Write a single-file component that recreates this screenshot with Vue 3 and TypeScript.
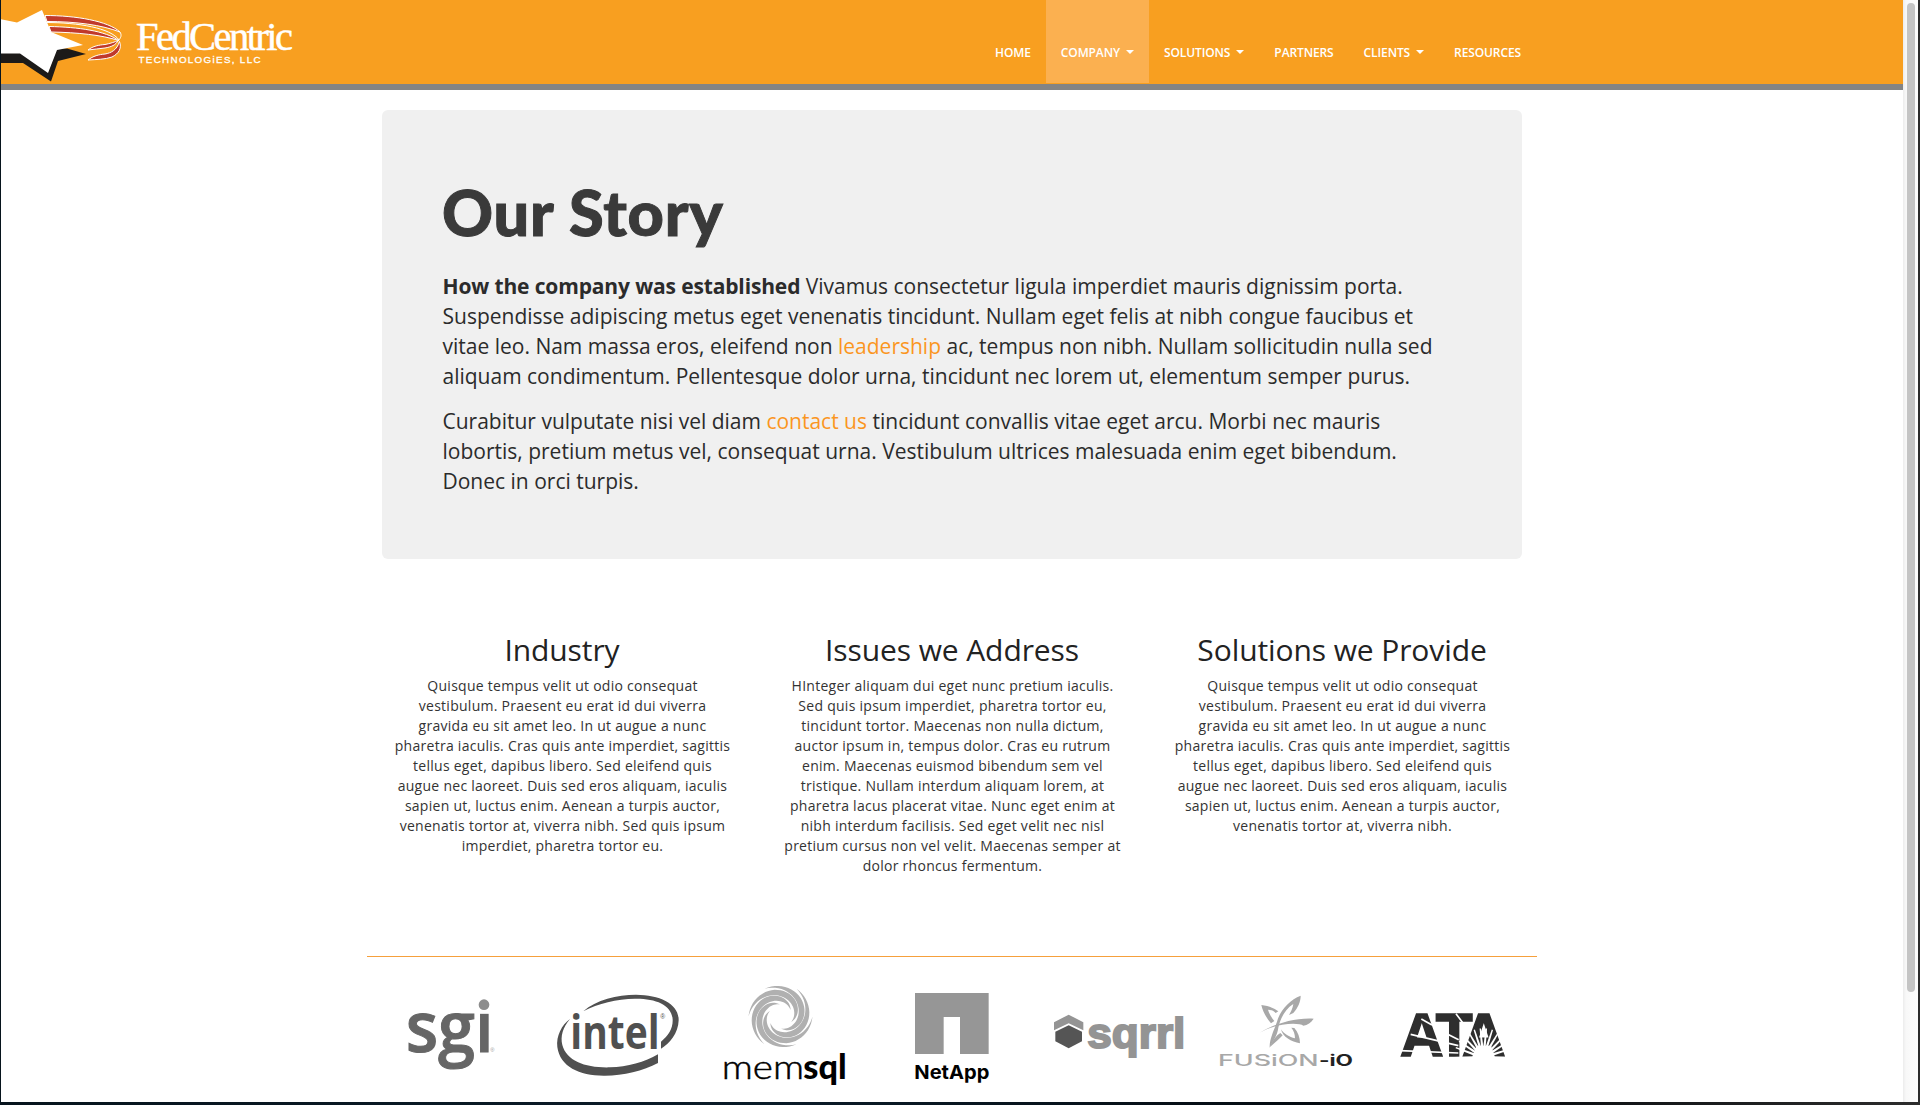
<script setup lang="ts">
interface NavItem { label: string; menu?: boolean; active?: boolean }
interface Column { title: string; lines: string[] }

const nav: NavItem[] = [
  { label: 'HOME' },
  { label: 'COMPANY', menu: true, active: true },
  { label: 'SOLUTIONS', menu: true },
  { label: 'PARTNERS' },
  { label: 'CLIENTS', menu: true },
  { label: 'RESOURCES' },
]

const columns: Column[] = [
  {
    title: 'Industry',
    lines: [
      'Quisque tempus velit ut odio consequat',
      'vestibulum. Praesent eu erat id dui viverra',
      'gravida eu sit amet leo. In ut augue a nunc',
      'pharetra iaculis. Cras quis ante imperdiet, sagittis',
      'tellus eget, dapibus libero. Sed eleifend quis',
      'augue nec laoreet. Duis sed eros aliquam, iaculis',
      'sapien ut, luctus enim. Aenean a turpis auctor,',
      'venenatis tortor at, viverra nibh. Sed quis ipsum',
      'imperdiet, pharetra tortor eu.',
    ],
  },
  {
    title: 'Issues we Address',
    lines: [
      'HInteger aliquam dui eget nunc pretium iaculis.',
      'Sed quis ipsum imperdiet, pharetra tortor eu,',
      'tincidunt tortor. Maecenas non nulla dictum,',
      'auctor ipsum in, tempus dolor. Cras eu rutrum',
      'enim. Maecenas euismod bibendum sem vel',
      'tristique. Nullam interdum aliquam lorem, at',
      'pharetra lacus placerat vitae. Nunc eget enim at',
      'nibh interdum facilisis. Sed eget velit nec nisl',
      'pretium cursus non vel velit. Maecenas semper at',
      'dolor rhoncus fermentum.',
    ],
  },
  {
    title: 'Solutions we Provide',
    lines: [
      'Quisque tempus velit ut odio consequat',
      'vestibulum. Praesent eu erat id dui viverra',
      'gravida eu sit amet leo. In ut augue a nunc',
      'pharetra iaculis. Cras quis ante imperdiet, sagittis',
      'tellus eget, dapibus libero. Sed eleifend quis',
      'augue nec laoreet. Duis sed eros aliquam, iaculis',
      'sapien ut, luctus enim. Aenean a turpis auctor,',
      'venenatis tortor at, viverra nibh.',
    ],
  },
]

// One tapered spiral arm, winding clockwise from the rim to the hole.
function spiralArm(): string {
  const outer: string[] = []
  const inner: string[] = []
  const steps = 32
  for (let i = 0; i <= steps; i++) {
    const t = i / steps
    const angle = Math.PI + t * Math.PI * 1.15
    const radius = 32 - 20 * t
    const half = 3 * Math.sin(Math.PI * t)
    const at = (r: number) => `${(r * Math.cos(angle)).toFixed(2)} ${(r * Math.sin(angle)).toFixed(2)}`
    outer.push(at(radius + half))
    inner.unshift(at(radius - half))
  }
  return `M${outer.join('L')}L${inner.join('L')}Z`
}
const arm = spiralArm()
const swirlArms = [0, 60, 120, 180, 240, 300]
const rays = [-90, -70, -56, -43, -30, -18, -6, 6, 18, 31, 44, 57, 72, 90]
</script>

<template>
  <div class="window">
    <div class="view">
      <div class="page">
        <header class="header">
          <svg class="brand" viewBox="1 0 310 84" width="310" height="84">
            <path d="M0 52H22L48 72 57 48 67 48.500 86 54 58 61 51 81.500 23 63H0Z" fill="#1c1a19" />
            <g fill="#c0392b" stroke="#fff" stroke-width="1">
              <path d="M45 15.500C76 15.500 108 21 120 32C102 25 76 21.500 47 21.500Z" />
              <path d="M49 26.500C78 27 106 31 118.500 40.500C102 35 78 32.500 51 32Z" />
              <path d="M88 50C93 46 99 45 105 44.500C110 43.500 115 42 118 40.500C116 45 111 47 105 48C99 49 94 49 88 50Z" />
              <path d="M88 60C93 56 99 54.500 105 54C111 53 117 50 119.500 41.500C122 48 119 53.500 112 57C105 59.500 96 59.500 88 60Z" />
            </g>
            <path d="M46 22.500C78 22.500 111 28 119 40M120 32C122 35 121 38 118 41" fill="none" stroke="#fff" />
            <path d="M0 19 17 22.500 42 10 51 32 83 45 57 50 48 73 20 53.500H0Z" fill="#fff" />
            <text x="136" y="50" class="brand-name" textLength="157">FedCentric</text>
            <text x="138.500" y="62.500" class="brand-sub" textLength="122">TECHNOLOGiES, LLC</text>
          </svg>
          <nav class="nav">
            <a v-for="item in nav" :key="item.label" class="nav-item" :class="{ active: item.active }">
              {{ item.label }}<span v-if="item.menu" class="caret"></span>
            </a>
          </nav>
        </header>

        <main class="container">
          <section class="story">
            <h1>Our Story</h1>
            <p>
              <b>How the company was established</b> Vivamus consectetur ligula imperdiet mauris dignissim porta.<br />
              Suspendisse adipiscing metus eget venenatis tincidunt. Nullam eget felis at nibh congue faucibus et<br />
              vitae leo. Nam massa eros, eleifend non <a>leadership</a> ac, tempus non nibh. Nullam sollicitudin nulla sed<br />
              aliquam condimentum. Pellentesque dolor urna, tincidunt nec lorem ut, elementum semper purus.
            </p>
            <p>
              Curabitur vulputate nisi vel diam <a>contact us</a> tincidunt convallis vitae eget arcu. Morbi nec mauris<br />
              lobortis, pretium metus vel, consequat urna. Vestibulum ultrices malesuada enim eget bibendum.<br />
              Donec in orci turpis.
            </p>
          </section>

          <section class="columns">
            <article v-for="col in columns" :key="col.title" class="column">
              <h2>{{ col.title }}</h2>
              <p>{{ col.lines.join('\n') }}</p>
            </article>
          </section>

          <section class="partners">
            <svg viewBox="367 958 167 142">
              <g transform="translate(380 960) scale(.33333)">
                <text x="77" y="280" font-family="Open Sans" font-weight="600" font-size="213" fill="#666" stroke="#666" stroke-width="3" textLength="264" lengthAdjust="spacingAndGlyphs">sgi</text>
                <rect x="286" y="108" width="54" height="56" fill="#fff" />
                <circle cx="312" cy="137" r="16" fill="#8d8d8d" />
                <text x="331" y="279" font-family="Liberation Sans" font-size="17" fill="#999">®</text>
              </g>
            </svg>
            <svg viewBox="534 958 167 142">
              <g transform="translate(380 960) scale(.33333)" fill="#505050">
                <path d="M610 157C648 122 712 107 768 107C842 108 897 135 896 184C895 224 868 254 843 269V248C866 230 879 208 878 182C876 138 828 118 765 119C710 120 655 133 610 157Z" />
                <path d="M570 180C548 206 541 232 547 258C560 307 618 327 690 325C742 324 795 309 834 286V312C790 336 730 350 675 350C600 351 540 324 532 264C528 231 545 198 570 180Z" />
                <text x="571" y="269" font-family="Open Sans" font-weight="700" font-size="138" textLength="268" lengthAdjust="spacingAndGlyphs">intel</text>
                <text x="841" y="179" font-family="Liberation Sans" font-size="20">®</text>
              </g>
            </svg>
            <svg viewBox="701 958 167 142">
              <g transform="translate(780.500 1017.500)">
                <path v-for="a in swirlArms" :key="a" :transform="`rotate(${a})`" :d="arm" fill="#b0b0b0" />
              </g>
              <g transform="translate(700 970) scale(.33333)">
                <text x="65" y="331" font-family="Lato" font-weight="300" font-size="103" stroke="#000" stroke-width="1.500" textLength="247" lengthAdjust="spacingAndGlyphs">mem</text>
                <text x="310" y="331" font-family="Lato" font-weight="900" font-size="100" textLength="130" lengthAdjust="spacingAndGlyphs">sql</text>
              </g>
            </svg>
            <svg viewBox="868 958 167 142">
              <g transform="translate(700 970) scale(.33333)">
                <path d="M645 72H866V255H780V144H731V255H645Z" fill="#969696" />
                <text x="643" y="331" font-family="Inter" font-weight="700" font-size="57" textLength="225" lengthAdjust="spacingAndGlyphs">NetApp</text>
              </g>
            </svg>
            <svg viewBox="1035 958 167 142">
              <g transform="translate(1030 970) scale(.33333)">
                <path d="M72 160 116 137 160 160V184L116 163 72 184Z" fill="#949494" />
                <path d="M116 169 156 188V217L116 238 76 217V188Z" fill="#555" />
                <text x="172" y="236" font-family="Liberation Sans" font-weight="700" font-size="130" fill="#949494" stroke="#949494" stroke-width="6" textLength="294" lengthAdjust="spacingAndGlyphs">sqrrl</text>
              </g>
            </svg>
            <svg viewBox="1202 958 167 142">
              <g transform="translate(1030 970) scale(.33333)" fill="#a8a8a8">
                <path d="M812 80C780 92 751 122 741 158C731 186 718 210 719 236C728 216 742 201 745 176C752 146 765 121 790 105C788 119 782 130 777 138L790 132C804 116 812 98 812 80Z" />
                <path d="M690 191C721 170 790 145 851 149C843 161 833 168 820 170C806 160 742 161 690 191Z" />
                <path d="M694 108C718 111 735 119 745 127L737 132C730 125 722 122 714 122C719 137 726 148 733 156L723 163C708 145 698 127 694 108Z" />
                <path d="M753 181C762 195 778 204 795 208C795 195 791 184 784 176L793 177C804 190 810 204 810 223C784 218 758 205 753 181Z" />
                <path d="M720 234C737 220 749 208 758 199L751 192C740 199 729 211 720 234Z" />
                <text x="564" y="290" font-family="Inter" font-weight="500" font-size="46" textLength="302" lengthAdjust="spacingAndGlyphs">FUSiON</text>
                <text x="867" y="290" font-family="Inter" font-weight="700" font-size="46" fill="#222" textLength="102" lengthAdjust="spacingAndGlyphs">-iO</text>
              </g>
            </svg>
            <svg viewBox="1369 958 167 142">
              <g transform="translate(1350 930) scale(.33333)">
                <text x="150 257 336" y="380" font-family="Liberation Sans" font-weight="700" font-size="181" fill="#2e2e2e" stroke="#2e2e2e" stroke-width="5">ATA</text>
                <path d="M214 270 246 288M182 316 325 350M150 365 325 372M290 314 326 332M318 254 346 292" stroke="#fff" stroke-width="5" fill="none" />
                <g transform="translate(400 386)">
                  <path v-for="r in rays" :key="r" :transform="`rotate(${r})`" d="M-4 -20H4L2 -88H-2Z" fill="#fff" />
                  <ellipse rx="33" ry="26" fill="#fff" />
                </g>
              </g>
            </svg>
          </section>
        </main>
      </div>
      <div class="scrollbar"><div class="thumb"></div></div>
    </div>
  </div>
</template>

<style>
body { background: #fff; overflow: hidden; }
</style>

<style scoped>
* { box-sizing: border-box; }
.window {
  width: 1920px;
  height: 1105px;
  padding: 0 2px 3px 1px;
  background: linear-gradient(90deg, #07141d, #0b1c29 40%, #03070b 75%, #2c2c2c);
  font-family: "Open Sans", sans-serif;
  color: #333;
}
.view { display: flex; height: 1102px; background: #fff; }
.page { width: 1902px; }
.header {
  display: flex;
  justify-content: space-between;
  height: 90px;
  background: #f89f20;
  border-bottom: 6px solid #848484;
}
.brand { display: block; }
.brand-name { font-family: "Liberation Serif", serif; font-size: 40.500px; fill: #fff; stroke: #fff; stroke-width: .5; }
.brand-sub { font-family: "Liberation Sans", sans-serif; font-size: 9.800px; fill: #fff; stroke: #fff; stroke-width: .3; }
.nav { display: flex; margin-right: 367px; }
.nav-item {
  display: flex;
  align-items: center;
  height: 83px;
  padding: 22px 15px 0;
  font-size: 12px;
  font-weight: 600;
  letter-spacing: -.11px;
  color: #fff;
}
.nav-item.active { background: #fbb050; }
.caret {
  margin: -2px 0 0 6px;
  border: 4px solid transparent;
  border-top-color: #fff;
  border-bottom: 0;
}
.container { width: 1170px; margin: 0 auto; }
.story {
  height: 449px;
  margin: 20px 15px 0;
  padding: 67px 60px 0;
  background: #f0f0f0;
  border-radius: 6px;
}
h1 {
  margin: 0;
  font: 900 63px/70px Lato, sans-serif;
  letter-spacing: .8px;
  color: #3a3a3a;
  -webkit-text-stroke: 1px #3a3a3a;
}
.story p {
  margin: 24px 0 0;
  padding-left: .5px;
  font-size: 21px;
  line-height: 30px;
  color: #2b2b2b;
  white-space: nowrap;
}
.story p + p { margin-top: 15px; }
.story b { letter-spacing: -.14px; }
.story a { color: #fb961f; }
.columns { display: flex; height: 398px; padding-top: 73px; border-bottom: 1px solid #f6a03c; }
.column { flex: 1; text-align: center; }
h2 { margin: 0; font-size: 30px; font-weight: 400; line-height: 36px; letter-spacing: -.1px; color: #222; }
.column p { margin: 8px 0 0; padding-left: 1px; font-size: 14px; line-height: 20px; letter-spacing: .27px; white-space: pre; }
.partners { display: flex; height: 142px; }
.partners svg { display: block; width: 167px; height: 142px; overflow: visible; }
.scrollbar {
  width: 15px;
  padding: 3px 0 0 4px;
  background: linear-gradient(90deg, #ececec, #f8f8f8 20%, #fcfcfc);
}
.thumb { width: 8px; height: 989px; border-radius: 4px; background: #c4c4c4; }
</style>
